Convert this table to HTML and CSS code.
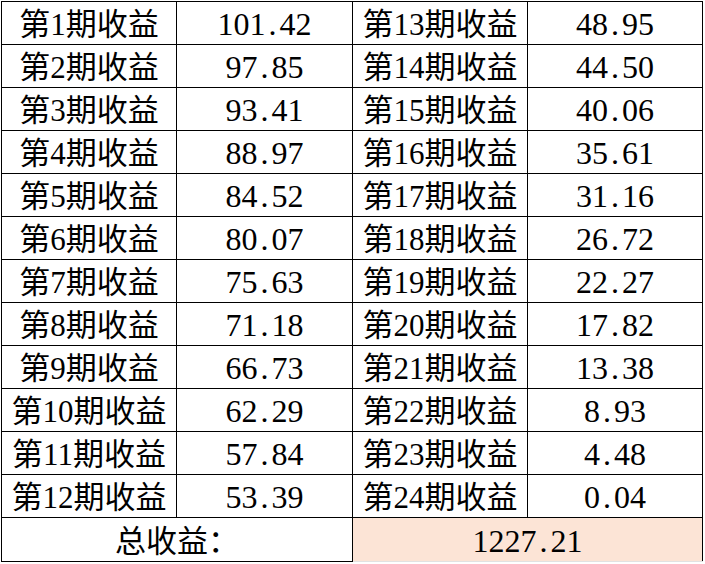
FILE: index.html
```html
<!DOCTYPE html>
<html lang="zh">
<head>
<meta charset="utf-8">
<link rel="stylesheet" href="styles.css">
</head>
<body>
<table class="sheet">
  <colgroup>
    <col class="c1"><col class="c2"><col class="c3"><col class="c4">
  </colgroup>
  <tbody>
    <tr><td>第1期收益</td><td class="num">101<span class="dot">.</span>42</td><td>第13期收益</td><td class="num">48<span class="dot">.</span>95</td></tr>
    <tr><td>第2期收益</td><td class="num">97<span class="dot">.</span>85</td><td>第14期收益</td><td class="num">44<span class="dot">.</span>50</td></tr>
    <tr><td>第3期收益</td><td class="num">93<span class="dot">.</span>41</td><td>第15期收益</td><td class="num">40<span class="dot">.</span>06</td></tr>
    <tr><td>第4期收益</td><td class="num">88<span class="dot">.</span>97</td><td>第16期收益</td><td class="num">35<span class="dot">.</span>61</td></tr>
    <tr><td>第5期收益</td><td class="num">84<span class="dot">.</span>52</td><td>第17期收益</td><td class="num">31<span class="dot">.</span>16</td></tr>
    <tr><td>第6期收益</td><td class="num">80<span class="dot">.</span>07</td><td>第18期收益</td><td class="num">26<span class="dot">.</span>72</td></tr>
    <tr><td>第7期收益</td><td class="num">75<span class="dot">.</span>63</td><td>第19期收益</td><td class="num">22<span class="dot">.</span>27</td></tr>
    <tr><td>第8期收益</td><td class="num">71<span class="dot">.</span>18</td><td>第20期收益</td><td class="num">17<span class="dot">.</span>82</td></tr>
    <tr><td>第9期收益</td><td class="num">66<span class="dot">.</span>73</td><td>第21期收益</td><td class="num">13<span class="dot">.</span>38</td></tr>
    <tr><td>第10期收益</td><td class="num">62<span class="dot">.</span>29</td><td>第22期收益</td><td class="num">8<span class="dot">.</span>93</td></tr>
    <tr><td>第11期收益</td><td class="num">57<span class="dot">.</span>84</td><td>第23期收益</td><td class="num">4<span class="dot">.</span>48</td></tr>
    <tr><td>第12期收益</td><td class="num">53<span class="dot">.</span>39</td><td>第24期收益</td><td class="num">0<span class="dot">.</span>04</td></tr>
    <tr class="total"><td colspan="2">总收益：</td><td colspan="2" class="num sum">1227<span class="dot">.</span>21</td></tr>
  </tbody>
</table>
</body>
</html>
```
FILE: styles.css
```css
html, body {
  margin: 0;
  padding: 0;
  background: #ffffff;
}

body {
  padding: 1px 0 0 1px;
  font-family: "Liberation Serif", "Noto Sans CJK SC", serif;
  color: #000000;
}

.sheet {
  border-collapse: collapse;
  table-layout: fixed;
  width: 701px;
}

.c1 { width: 175px; }
.c2 { width: 176px; }
.c3 { width: 175px; }
.c4 { width: 175px; }

.sheet td {
  border: 1px solid #000000;
  height: 39px;
  padding: 3px 0 0;
  text-align: center;
  vertical-align: middle;
  font-size: 31px;
  line-height: 39px;
  white-space: nowrap;
}

.sheet td.num {
  font-size: 32px;
}

.dot {
  padding: 0 3px;
}

.total td {
  height: 40px;
}

.sheet td.sum {
  background: #fce4d6;
  border-bottom-color: #e2e2e2;
}
```
